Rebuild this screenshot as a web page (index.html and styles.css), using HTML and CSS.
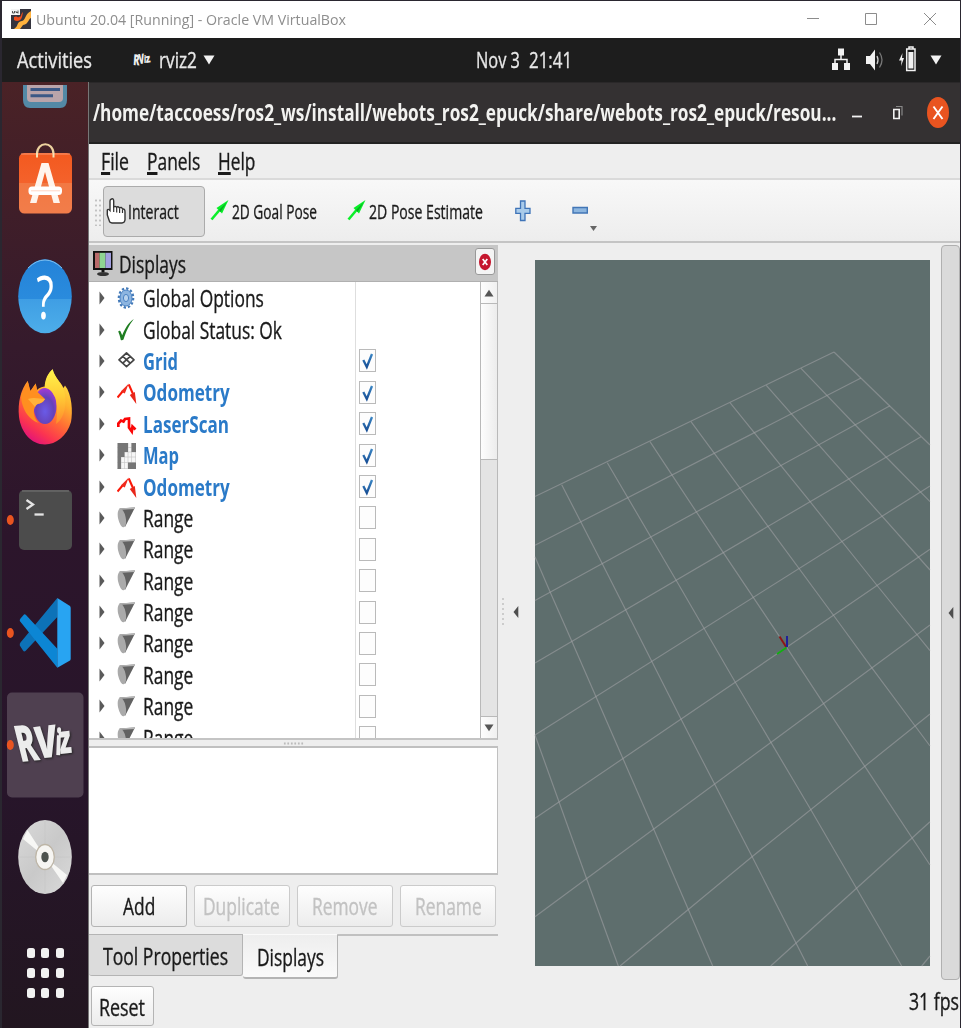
FILE: index.html
```html
<!DOCTYPE html>
<html lang="en">
<head>
<meta charset="utf-8">
<title>Ubuntu 20.04 [Running] - Oracle VM VirtualBox</title>
<link rel="stylesheet" href="styles.css">
</head>
<body>
<svg class="defs" width="0" height="0" aria-hidden="true">
  <defs>
    <linearGradient id="gOrange" x1="0" y1="0" x2="0" y2="1"><stop offset="0" stop-color="#f3591f"/><stop offset=".49" stop-color="#f4622b"/><stop offset=".5" stop-color="#f27843"/><stop offset="1" stop-color="#f27d4a"/></linearGradient>
    <linearGradient id="gBlue" x1="0" y1="0" x2="0" y2="1"><stop offset="0" stop-color="#2483d8"/><stop offset=".53" stop-color="#2a8bdd"/><stop offset=".54" stop-color="#3f9ee4"/><stop offset="1" stop-color="#4daeea"/></linearGradient>
    <linearGradient id="gFox" x1=".8" y1="0" x2=".3" y2="1"><stop offset="0" stop-color="#fff04a"/><stop offset=".35" stop-color="#ffb02e"/><stop offset=".6" stop-color="#ff6a35"/><stop offset=".82" stop-color="#fb3450"/><stop offset="1" stop-color="#e1127c"/></linearGradient>
    <linearGradient id="gFlame" x1="0" y1="0" x2="0" y2="1"><stop offset="0" stop-color="#fff44c"/><stop offset=".5" stop-color="#ffcb35"/><stop offset="1" stop-color="#ff8a2c"/></linearGradient>
    <radialGradient id="gGlobe" cx=".5" cy=".65" r=".65"><stop offset="0" stop-color="#6a5be8"/><stop offset=".6" stop-color="#6542b8"/><stop offset="1" stop-color="#a53bd6"/></radialGradient>
    <linearGradient id="gDisc" x1="0" y1="0" x2="1" y2="1"><stop offset="0" stop-color="#d9d9d9"/><stop offset=".5" stop-color="#c9c9c9"/><stop offset="1" stop-color="#dadada"/></linearGradient>
    <linearGradient id="gTick" x1="0" y1="0" x2="0" y2="1"><stop offset="0" stop-color="#3b86c4"/><stop offset="1" stop-color="#174f96"/></linearGradient>

    <symbol id="arrow" viewBox="0 0 6 14"><path d="M.5 .5 5.500 7 .5 13.500Z" fill="#5a5a5a"/></symbol>
    <symbol id="tick" viewBox="0 0 15 21"><path d="M3.300 10 6.800 17 12 4" fill="none" stroke="url(#gTick)" stroke-width="2.300"/></symbol>
    <symbol id="gear" viewBox="0 0 20 26"><ellipse cx="9" cy="12" rx="7.2" ry="9.6" fill="none" stroke="#4279b8" stroke-width="2.2" stroke-dasharray="2.4 2"/><ellipse cx="9" cy="12" rx="6" ry="8" fill="#8db5e0" stroke="#4b83c4"/><ellipse cx="9" cy="12" rx="2.6" ry="3.6" fill="#b9d3ee" stroke="#4b83c4"/></symbol>
    <symbol id="ok" viewBox="0 0 20 26"><path d="M1.2 14.5c1.2-1 2-.9 2.7.8l1.3 3C8 11.500 11.200 6 16.800 2 11.800 8.600 9 14.500 6.500 22.600 5.600 23.400 4.500 23.600 3.800 23 3.200 20 2.300 17 1.200 14.500Z" fill="#1f7d21"/></symbol>
    <symbol id="grid" viewBox="0 0 20 26"><path d="M9.500 5 17 11.800 9.500 18.600 2 11.800ZM5.800 8.400 13.200 15.200M13.200 8.400 5.800 15.200" fill="none" stroke="#454545" stroke-width="1.700" stroke-linejoin="round"/></symbol>
    <symbol id="odom" viewBox="0 0 20 26"><path d="M.5 17.500 6 11" stroke="#fb1808" stroke-width="2"/><path d="M3.800 11.500 11.800 3.500 7.800 13.500Z" fill="#f02a1e"/><path d="M11.800 4.500 16 14" stroke="#fb1808" stroke-width="2.100"/><path d="M12.800 15 17.800 12 19.300 24Z" fill="#e8261a"/></symbol>
    <symbol id="laser" viewBox="0 0 20 26"><path d="M1.300 16V12.500L4 9.500 6.500 10.500 8 8 12 7.500V16.500L14.800 20.500 15.500 15.500 18.500 18.500" fill="none" stroke="#fb0606" stroke-width="2.700"/></symbol>
    <symbol id="map" viewBox="0 0 20 26"><path d="M.5 0H19V26H.5Z" fill="#f6f6f6"/><path d="M4 0V26M7.500 0V26M11 0V26M14.500 0V26M18.500 0V26M.5 4.500H19M.5 9H19M.5 14H19M.5 19.500H19M.5 25.500H19" stroke="#c4c4c4" stroke-width=".6"/><path d="M.5 0H11V9H7.500V14H4V26H.5ZM14.500 0H19V9H14.500ZM11 19.500H19V26H11Z" fill="#767676"/></symbol>
    <symbol id="range" viewBox="0 0 20 26"><path d="M2.500 3.500 18 2.500 8 22Z" fill="#626262"/><path d="M2.500 3.500 18 2.200V4L4 4.800Z" fill="#b5b5b5"/><ellipse cx="4.900" cy="13" rx="3.800" ry="9.500" transform="rotate(-12 4.900 13)" fill="#aaa"/></symbol>
    <symbol id="pose" viewBox="0 0 20 24"><path d="M1.500 20.500 9.500 11" stroke="#0bef2a" stroke-width="2.600"/><path d="M6.500 9 18.500 1 12 14.500Z" fill="#06ef27"/><path d="M9 11 16.500 3.500 10.500 13Z" fill="#0bab22"/></symbol>
  </defs>
</svg>

<div class="screen">
  <header class="host-bar">
    <svg class="host-icon" viewBox="0 0 20 20"><path d="M0 0H20V20H0Z" fill="#35343e"/><path d="M3 20C8 17 5 13 11 12 15 11 13 6 20 2V9C17 10 18 15 12 16L9 20Z" fill="#ffb23e"/><path d="M3 8C6 6 7 10 10 7 10 5 11 4 12 3L11 8C10 12 6 13 3 11Z" fill="#ef4d1c"/><path d="M0 0H9V6H0Z" fill="#f4f4f4"/><path d="M1.500 2V4H3.500V2M5 2V3.500H7M7 1.500V4.500" fill="none" stroke="#444" stroke-width=".9"/></svg>
    <span class="t host-title">Ubuntu 20.04 [Running] - Oracle VM VirtualBox</span>
    <div class="host-controls">
      <svg viewBox="0 0 14 14"><path d="M1 6.500H13" stroke="#8c8c8c"/></svg>
      <svg viewBox="0 0 14 14"><path d="M1.500 1.500H12.500V12.500H1.500Z" fill="none" stroke="#8c8c8c"/></svg>
      <svg viewBox="0 0 14 14"><path d="M1 1 13 13M13 1 1 13" stroke="#8c8c8c"/></svg>
    </div>
  </header>

  <nav class="top-bar">
    <span class="t activities">Activities</span>
    <svg class="app-logo" viewBox="0 0 19 16"><g fill="#eee" font-weight="800"><text transform="translate(0 13) rotate(4) scale(.62 1)" font-size="15">R</text><text transform="translate(6 12) rotate(-5) scale(.58 1)" font-size="14">V</text><text transform="translate(11 11) scale(.6 1)" font-size="11">i</text><text transform="translate(13 11) rotate(-8) scale(.8 1)" font-size="12">z</text></g></svg>
    <span class="t app-name">rviz2</span>
    <svg class="caret" viewBox="0 0 12 10"><path d="M.5.500H11.500L6 9.500Z" fill="#f2f2f2"/></svg>
    <span class="t day">Nov 3</span>
    <span class="t clock">21:41</span>
    <svg class="net" viewBox="0 0 20 24"><path d="M7 1.500h6v7H7ZM1 16h6v7H1ZM13 16h6v7h-6Z" fill="#f2f2f2"/><path d="M10 8V12.500M4 17V12.500H16V17" fill="none" stroke="#f2f2f2" stroke-width="1.500"/></svg>
    <svg class="vol" viewBox="0 0 20 24"><path d="M1 8H5L10 1.500V22.500L5 16H1Z" fill="#f2f2f2"/><path d="M12 8Q14 12 12 16" fill="none" stroke="#ccc" stroke-width="1.300"/><path d="M14.500 4.500Q19.500 12 14.500 19.500" fill="none" stroke="#777" stroke-width="1.300"/></svg>
    <svg class="bat" viewBox="0 0 20 28"><path d="M4.500 8 1 15.500H3.500L3 21 6 13H4Z" fill="#f2f2f2"/><path d="M8.700 4H17V25.500H8.700ZM11 2H15V4H11Z" fill="none" stroke="#f2f2f2" stroke-width="1.500"/><path d="M10.400 7H15.400V23.500H10.400Z" fill="#f2f2f2"/></svg>
    <svg class="caret" viewBox="0 0 12 10"><path d="M.5.500H11.500L6 9.500Z" fill="#f2f2f2"/></svg>
  </nav>

  <div class="desktop">
    <aside class="dock">
      <div class="dock-item clipped"><svg viewBox="0 0 86 45.400"><path d="M21 3H65V18Q65 26 58 26H28Q21 26 21 18Z" fill="#5389a6"/><path d="M25 3H61V16Q61 20 57 20H29Q25 20 25 16Z" fill="#b9a4aa"/><path d="M28.500 7.500H58M28.500 13.800H51" stroke="#3b5886" stroke-width="3"/></svg></div>
      <div class="dock-item"><svg viewBox="0 0 86 112.300"><path d="M35 31V27C35 14 51.500 14 51.500 27V31" fill="none" stroke="#edd29f" stroke-width="2.200"/><rect x="17" y="26" width="53" height="60.500" rx="5.500" fill="url(#gOrange)"/><path d="M19 27H68" stroke="#fb9a72" stroke-width="1"/><path d="M35 26V30.500M51.500 26V30.500" stroke="#f7e3b6" stroke-width="2"/><path d="M39.500 36H46.500L58 76H51.500L43 45 34.500 76H28Z" fill="#fff4ec"/><rect x="26.500" y="59.500" width="33.500" height="8.500" rx="3.500" fill="#fff"/><path d="M29 63.800H58" stroke="#ffd4c2" stroke-width="1"/></svg></div>
      <div class="dock-item"><svg viewBox="0 0 86 112.300"><ellipse cx="43" cy="56.300" rx="26.800" ry="37" fill="url(#gBlue)"/><path d="M26 28Q43 12 60 28" fill="none" stroke="#7ec0f0" stroke-width="1"/><text transform="translate(34.200 79) scale(.68 1)" class="help-mark">?</text></svg></div>
      <div class="dock-item"><svg viewBox="0 0 86 112.300"><path d="M25.700 29C27 33 27 37 28.500 39L33.700 31.500 35 38C38 35 41 35 43 34.500 44 27 46 22 50.700 17.300 52 25 59 30 61.500 36L63 33.500C70 42 71 60 69 70 65 84 54 92.500 43 92.500 29 92.500 19 80 17 65 15.500 50 19 37 25.700 29Z" fill="url(#gFox)"/><ellipse cx="43" cy="54" rx="11.500" ry="18" fill="url(#gGlobe)"/><path d="M42.500 36C43 27 46 21 50.700 17.300 52 25 61 33 63 42 65 58 60 68 54 72 56 60 55 52 53.500 46L50 40Q46 35.500 42.500 36Z" fill="url(#gFlame)"/><path d="M25.700 29 28.500 39 33.700 31.500 35.500 40 43 47C40 54 35 49 33 55 30 60 33 68 37 71 26 68 19 55 19 43Z" fill="#ff8f20"/><path d="M26 47C32 45 38 47 43 47 40 53 35 50 33 55Z" fill="#ffb33a"/></svg></div>
      <div class="dock-item"><svg viewBox="0 0 86 112.300"><ellipse cx="8.300" cy="56" rx="3.500" ry="5" fill="#e95420"/><rect x="17" y="26" width="53" height="60" rx="5" fill="#4c4c4c"/><path d="M20 27H67" stroke="#777"/><path d="M24.500 36 31 40.500 24.500 45" fill="none" stroke="#e4e4e4" stroke-width="2.300"/><path d="M32.500 50.500H41.700" stroke="#e4e4e4" stroke-width="2.300"/></svg></div>
      <div class="dock-item"><svg viewBox="0 0 86 112.300"><ellipse cx="8.300" cy="56" rx="3.500" ry="5" fill="#e95420"/><path d="M55.300 21V40L23.500 74Q22 75 21 73.500L17.800 68.500Q17.500 66.500 18.500 65.500Z" fill="#0d72b8"/><path d="M17.800 44Q17.500 42.500 18.500 41.500L22 37.500Q23 37 24 38L55.300 71.700V90.700Z" fill="#0c86d4"/><path d="M55.300 21 68 29Q68.700 30 68.700 31V81.500Q68.700 83 68 83.500L55.300 90.700Z" fill="#28a4f2"/></svg></div>
      <div class="dock-item"><svg viewBox="0 0 86 112.300"><rect x="5" y="3.500" width="76.500" height="105" rx="5" fill="#4f4050"/><ellipse cx="8.300" cy="56" rx="3.500" ry="5" fill="#e95420"/><g class="rviz-mark"><text transform="translate(18.500 73) rotate(-6) skewX(8) scale(.58 1)" font-size="51">R</text><text transform="translate(35 70) rotate(-7) scale(.72 1)" font-size="45">V</text><text transform="translate(53 66) rotate(2) scale(.55 1)" font-size="36">i</text><text transform="translate(58 65) rotate(-6) scale(.62 1)" font-size="40">z</text></g></svg></div>
      <div class="dock-item"><svg viewBox="0 0 86 112.300"><ellipse cx="43" cy="56" rx="26.800" ry="37" fill="url(#gDisc)"/><path d="M43 56 21 38 25.500 29ZM43 56 65 74 61 82Z" fill="#f7f7f5"/><path d="M43 19V93M16.500 56H69.500" stroke="#c2c2c2" stroke-width=".5"/><ellipse cx="43" cy="56" rx="9.300" ry="12.500" fill="#f6f5f2" stroke="#bdb5a6" stroke-width="1.300"/><ellipse cx="43" cy="56" rx="3.700" ry="5.200" fill="#4d524e"/></svg></div>
      <div class="apps"><i></i><i></i><i></i><i></i><i></i><i></i><i></i><i></i><i></i></div>
    </aside>

    <main class="window">
      <header class="win-title">
        <span class="t win-name">/home/taccoess/ros2_ws/install/webots_ros2_epuck/share/webots_ros2_epuck/resou...</span>
        <svg class="w-min" viewBox="0 0 10 14"><path d="M0 10.500H10" stroke="#f2f2f2" stroke-width="1.800"/></svg>
        <svg class="w-max" viewBox="0 0 12 16"><path d="M1.800 4.500H7.200V13.500H1.800Z" fill="none" stroke="#f2f2f2" stroke-width="1.600"/><path d="M4 1.500H10V10.500" fill="none" stroke="#888" stroke-width="1.200"/></svg>
        <svg class="w-close" viewBox="0 0 22 32"><ellipse cx="11" cy="15.500" rx="11" ry="15.500" fill="#e95420"/><path d="M6.500 9.500 15.500 22M15.500 9.500 6.500 22" stroke="#fff" stroke-width="1.900"/></svg>
      </header>

      <nav class="menu">
        <span class="t m-file"><u>F</u>ile</span>
        <span class="t m-panels"><u>P</u>anels</span>
        <span class="t m-help"><u>H</u>elp</span>
      </nav>

      <div class="toolbar">
        <span class="grip"></span>
        <button class="tool active"><svg class="hand" viewBox="0 0 20 28"><path d="M5.500 2Q7.500 1 7.700 4V10Q9.500 8.500 10.500 10.500 12 8.800 13.500 11 15.500 9.500 16.500 12 19 11.500 19 15V23Q18.500 26 16 26H6Q3.500 26 3 23L1.300 18V13Q2 11.500 4 13.500V4Q4 2.500 5.500 2Z" fill="#fff" stroke="#333" stroke-width="1.400"/><path d="M7.700 10V15M10.700 11V15.500M13.600 11.500V16M16.500 12.500V16" stroke="#333" stroke-width="1.200"/></svg><span class="t t-interact">Interact</span></button>
        <svg class="pose p1"><use href="#pose"/></svg><span class="t t-goal">2D Goal Pose</span>
        <svg class="pose p2"><use href="#pose"/></svg><span class="t t-est">2D Pose Estimate</span>
        <svg class="plus" viewBox="0 0 16 22"><path d="M5.500 1H10V8.300H15V13.300H10V20.500H5.500V13.300H.8V8.300H5.500Z" fill="#a9cbea" stroke="#3f74b8" stroke-width="1.300"/></svg>
        <svg class="minus" viewBox="0 0 26 28"><path d="M1 10.500H15.300V16H1Z" fill="#8db6df" stroke="#4276b6" stroke-width="1.400"/><path d="M18 29H25L21.500 34Z" fill="#666"/></svg>
      </div>

      <div class="content">
        <section class="left">
          <header class="dock-head">
            <svg class="monitor" viewBox="0 0 20 28"><path d="M0 2H19.500V21H0Z" fill="#111"/><path d="M2 3.800H6.500V19H2Z" fill="#b86a6a"/><path d="M6.500 3.800H12.500V19H6.500Z" fill="#8fd492"/><path d="M12.500 3.800H18V19H12.500Z" fill="#a29fe0"/><path d="M8.500 21H11.500V23H8.500Z" fill="#111"/><ellipse cx="10" cy="25" rx="6" ry="2" fill="#333"/></svg>
            <span class="t d-title">Displays</span>
            <button class="d-close"><svg viewBox="0 0 12 18"><ellipse cx="6" cy="9" rx="6" ry="8.300" fill="#c5162e"/><path d="M3.700 6 8.300 12M8.300 6 3.700 12" stroke="#fff" stroke-width="1.700"/></svg></button>
          </header>
          <div class="tree">
            <ul class="rows">
              <li><svg class="ar"><use href="#arrow"/></svg><svg class="ic"><use href="#gear"/></svg><span class="t r-opt">Global Options</span></li>
              <li><svg class="ar"><use href="#arrow"/></svg><svg class="ic"><use href="#ok"/></svg><span class="t r-stat">Global Status: Ok</span></li>
              <li><svg class="ar"><use href="#arrow"/></svg><svg class="ic"><use href="#grid"/></svg><span class="t on r-grid">Grid</span><span class="box"><svg><use href="#tick"/></svg></span></li>
              <li><svg class="ar"><use href="#arrow"/></svg><svg class="ic"><use href="#odom"/></svg><span class="t on r-odom">Odometry</span><span class="box"><svg><use href="#tick"/></svg></span></li>
              <li><svg class="ar"><use href="#arrow"/></svg><svg class="ic"><use href="#laser"/></svg><span class="t on r-laser">LaserScan</span><span class="box"><svg><use href="#tick"/></svg></span></li>
              <li><svg class="ar"><use href="#arrow"/></svg><svg class="ic"><use href="#map"/></svg><span class="t on r-map">Map</span><span class="box"><svg><use href="#tick"/></svg></span></li>
              <li><svg class="ar"><use href="#arrow"/></svg><svg class="ic"><use href="#odom"/></svg><span class="t on r-odom">Odometry</span><span class="box"><svg><use href="#tick"/></svg></span></li>
              <li><svg class="ar"><use href="#arrow"/></svg><svg class="ic"><use href="#range"/></svg><span class="t r-range">Range</span><span class="box"></span></li>
              <li><svg class="ar"><use href="#arrow"/></svg><svg class="ic"><use href="#range"/></svg><span class="t r-range">Range</span><span class="box"></span></li>
              <li><svg class="ar"><use href="#arrow"/></svg><svg class="ic"><use href="#range"/></svg><span class="t r-range">Range</span><span class="box"></span></li>
              <li><svg class="ar"><use href="#arrow"/></svg><svg class="ic"><use href="#range"/></svg><span class="t r-range">Range</span><span class="box"></span></li>
              <li><svg class="ar"><use href="#arrow"/></svg><svg class="ic"><use href="#range"/></svg><span class="t r-range">Range</span><span class="box"></span></li>
              <li><svg class="ar"><use href="#arrow"/></svg><svg class="ic"><use href="#range"/></svg><span class="t r-range">Range</span><span class="box"></span></li>
              <li><svg class="ar"><use href="#arrow"/></svg><svg class="ic"><use href="#range"/></svg><span class="t r-range">Range</span><span class="box"></span></li>
              <li><svg class="ar"><use href="#arrow"/></svg><svg class="ic"><use href="#range"/></svg><span class="t r-range">Range</span><span class="box"></span></li>
            </ul>
            <div class="scroll">
              <span class="s-btn up"><svg viewBox="0 0 10 8"><path d="M.5 7.500 5 .8 9.500 7.500Z" fill="#555"/></svg></span>
              <span class="thumb"></span>
              <span class="trough"></span>
              <span class="s-btn down"><svg viewBox="0 0 10 8"><path d="M.5.500 5 7.200 9.500.500Z" fill="#555"/></svg></span>
            </div>
          </div>
          <div class="splitter"><span></span></div>
          <div class="help-box"></div>
          <div class="buttons">
            <button><span class="t b-add">Add</span></button>
            <button disabled><span class="t b-dup">Duplicate</span></button>
            <button disabled><span class="t b-rem">Remove</span></button>
            <button disabled><span class="t b-ren">Rename</span></button>
          </div>
          <div class="tabs">
            <div class="tab"><span class="t tab-tool">Tool Properties</span></div>
            <div class="tab current"><span class="t tab-disp">Displays</span></div>
            <div class="tab-rest"></div>
          </div>
        </section>

        <div class="side-handle"><span class="dots"></span><svg viewBox="0 0 6 14"><path d="M5.300 1V13L.5 7Z" fill="#4e4e4e"/></svg></div>

        <svg class="view" viewBox="0 0 395 706">
          <path d="M0 0H395V706H0Z" fill="#5e6e6d"/>
          <g class="lines">
            <path d="M0 236.500 299 92"/><path d="M0 285.300 326 118"/><path d="M0 340.500 355 145.700"/><path d="M0 403 386 176.700"/><path d="M0 475 395 226"/><path d="M0 558.300 251.700 387.300 395 289.300"/><path d="M0 656.700 395 365"/><path d="M85 706 216.700 597 395 454"/><path d="M235.700 706 395 561.700"/><path d="M386.700 706 395 696"/>
            <path d="M299 92 395 185"/><path d="M266 108.300 351 197 395 241.700"/><path d="M231.300 125.300 313.300 218.300 395 310"/><path d="M195 142.700 274.300 240.700 341.700 325 395 390.700"/><path d="M156 161.700 233 266.300 298.300 355 336.700 407.700 395 486"/><path d="M115 181.700 188.300 292.700 251.700 387.300 330 506.700 395 605"/><path d="M72.300 202.700 141 320 200 421.700 276 550 366.700 706"/><path d="M26.700 224.700 67.300 303.700 146 459 217.300 597 272.700 706"/><path d="M0 296.700 15 331.700 36.700 381 118.300 568.300 177.700 706"/><path d="M0 475 51.700 619 83.300 706"/>
          </g>
          <path d="M251.500 387.500 244.500 376.500" stroke="#8e1414" stroke-width="2"/><path d="M252 387V376" stroke="#20209a" stroke-width="2"/><path d="M251.500 387.500 242 394" stroke="#10b010" stroke-width="1.800"/>
        </svg>

        <div class="right-bar"><svg viewBox="0 0 6 14"><path d="M5.300 1V13L.5 7Z" fill="#4e4e4e"/></svg></div>
      </div>

      <footer class="status">
        <button><span class="t reset">Reset</span></button>
        <span class="t fps">31 fps</span>
      </footer>
    </main>
  </div>
</div>
</body>
</html>
```
FILE: styles.css
```css
* { box-sizing: border-box; }
body {
  margin: 0;
  width: 961px;
  height: 1028px;
  overflow: hidden;
  background: #2a2730;
  font-family: "Open Sans", "Noto Sans", sans-serif;
  color: #1a1a1a;
}
.defs { position: absolute; }
svg { display: block; flex: none; overflow: visible; }
button { font: inherit; color: inherit; padding: 0; margin: 0; }

.screen {
  display: flex;
  flex-direction: column;
  width: 958px;
  height: 1027px;
  margin: 1px 0 0 2px;
}

/* Condensed labels: the box has the drawn width, the glyphs are squeezed into it. */
.t {
  display: block;
  flex: none;
  white-space: nowrap;
  font-size: 23px;
  line-height: 30px;
  transform: scaleX(.756);
  transform-origin: 0 50%;
  text-align: left;
  -webkit-text-stroke: .35px currentColor;
}

/* Host window title */
.host-bar { display: flex; align-items: center; height: 37px; background: #fff; padding: 0 23px 0 9px; }
.host-icon { width: 20px; height: 20px; margin-top: -1px; }
.host-title { width: 310px; margin: -2px 0 0 5px; font-size: 15px; color: #8e8e8e; transform: scaleX(.947); -webkit-text-stroke: 0; }
.host-controls { display: flex; gap: 44px; margin: -1px 0 0 auto; }
.host-controls svg { width: 14px; height: 14px; }
.host-controls svg:last-child { margin-left: 1px; }

/* GNOME top bar */
.top-bar { display: flex; align-items: center; height: 44px; background: #1d1d1d; color: #e8e8e8; }
.top-bar .t { font-size: 22.500px; }
.activities { width: 75px; margin-left: 14.500px; transform: scaleX(.809); }
.app-logo { width: 19px; height: 16px; margin-left: 41.500px; }
.top-bar .app-name { width: 38px; margin-left: 7px; transform: scaleX(.767); }
.caret { width: 12px; height: 10px; margin-left: 6px; }
.day { width: 44px; margin-left: 261px; transform: scaleX(.728); }
.clock { width: 43px; margin-left: 9px; transform: scaleX(.75); }
.net { width: 20px; height: 24px; margin-left: 258.500px; margin-top: -2px; }
.vol { width: 20px; height: 24px; margin-left: 14.500px; margin-top: -1px; }
.bat { width: 20px; height: 28px; margin-left: 13px; margin-top: -3px; }
.bat + .caret { margin-left: 12px; }

.desktop { display: flex; flex: 1; min-height: 0; }

/* Dock */
.dock {
  display: flex;
  flex-direction: column;
  width: 86px;
  overflow: hidden;
  background: linear-gradient(#4a2226 0, #421f28 10%, #351a2c 28%, #2c152b 48%, #27152a 75%, #221620 100%);
}
.dock-item { flex: none; height: 112.300px; }
.dock-item svg { width: 86px; height: 100%; }
.dock-item.clipped { height: 45.400px; }
.help-mark { font-size: 60px; fill: #fff; }
.rviz-mark { fill: #ececec; font-weight: 800; filter: drop-shadow(1px 1px 1px #222); }
.apps {
  display: grid;
  grid-template-columns: repeat(3, 8px);
  grid-auto-rows: 10px;
  gap: 10px 6.500px;
  margin: 35px 0 0 24.500px;
}
.apps i { border-radius: 2.500px; background: #f2f2f2; }

/* RViz window */
.window { display: flex; flex-direction: column; width: 872px; background: #eee; border-left: 1px solid #777; }
.win-title { display: flex; align-items: center; height: 62px; background: #343132; border-bottom: 2px solid #222; border-top: 1px solid #2a2829; }
.win-name { width: 743px; margin-left: 4px; font-size: 22.500px; font-weight: 700; color: #f2f2f0; transform: scaleX(.766); -webkit-text-stroke: 0; }
.w-min { width: 10px; height: 14px; margin-left: 16px; }
.w-max { width: 12px; height: 16px; margin-left: 30px; }
.w-close { width: 22px; height: 32px; margin-left: 23px; }

.menu { display: flex; align-items: center; height: 36px; border-bottom: 2px solid #dadada; padding-left: 11.500px; gap: 17.500px; }
.menu u { text-decoration-thickness: 2.500px; text-underline-offset: 2px; }
.m-file { width: 29px; transform: scaleX(.769); }
.m-panels { width: 53px; }
.m-help { width: 38px; transform: scaleX(.75); }

.toolbar {
  display: flex;
  align-items: center;
  height: 63px;
  padding-top: 2px;
  background: linear-gradient(#f8f8f8, #ededed);
  border-bottom: 2px solid #c4c4c4;
}
.toolbar .t { margin-top: -1px; font-size: 20.500px; transform: scaleX(.686); }
.grip { width: 7px; height: 28px; margin-left: 4.500px; background: radial-gradient(circle, #c2c2c2 1px, transparent 1.200px) 0 0 / 4px 5px; }
.tool { display: flex; align-items: center; width: 102px; height: 51px; margin-left: 2.500px; border: 1.500px solid #ababab; border-radius: 4px; background: #dcdcdc; }
.hand { width: 20px; height: 28px; margin: -1px 0 0 2px; }
.t-interact { width: 51px; margin-left: 2px; }
.pose { width: 20px; height: 24px; margin-left: 4.500px; margin-right: 2px; }
.pose.p2 { margin-left: 30px; }
.t-goal { width: 85px; }
.t-est { width: 114px; }
.toolbar .t-goal { transform: scaleX(.669); }
.plus { width: 16px; height: 22px; margin-left: 32px; }
.minus { width: 26px; height: 28px; margin-left: 41px; }
.toolbar > svg { margin-top: -1px; }

.content { display: flex; height: 737px; }
.left { display: flex; flex-direction: column; width: 408.500px; padding-top: 2px; }
.dock-head { display: flex; align-items: center; flex: none; height: 37px; background: #c6c6c6; border-bottom: 1px solid #b0b0b0; }
.monitor { width: 20px; height: 28px; margin-left: 4px; }
.d-title { width: 67px; margin: 1px 0 0 6px; }
.d-close { display: flex; align-items: center; justify-content: center; width: 20px; height: 27px; margin: -3px 2.500px 0 auto; border: 1px solid #999; border-radius: 3px; background: #f4f4f4; }
.d-close svg { width: 12px; height: 18px; }

.tree { display: flex; flex: none; height: 458px; background: #fff; border-right: 1px solid #b9b9b9; border-bottom: 2px solid #c4c4c4; overflow: hidden; }
.rows { flex: 1; margin: 0; padding: .5px 0 8px; list-style: none; background: linear-gradient(#dedede, #dedede) 266px 0 / 1px 100% no-repeat; }
.rows li { display: grid; grid-template-columns: 18px 26.500px 211.500px 1fr; align-items: center; height: 31.400px; padding-left: 9.500px; }
.ar { width: 6px; height: 14px; }
.ic { width: 20px; height: 26px; margin-top: 1px; }
.on { font-weight: 700; color: #2a7ac8; -webkit-text-stroke: 0; }
.r-grid, .r-map { transform: scaleX(.719); }
.r-odom, .r-laser { transform: scaleX(.742); }
.rows .t { width: 50px; }
.box { width: 17px; height: 23px; margin-left: 4px; border: 1.500px solid #bababa; background: #fdfdfd; }
.box svg { width: 15px; height: 21px; }

.scroll { display: flex; flex-direction: column; width: 17px; border-left: 1px solid #b9b9b9; background: #e4e4e4; }
.s-btn { display: flex; align-items: center; justify-content: center; flex: none; height: 22px; background: linear-gradient(90deg, #fdfdfd, #f0f0f0); }
.s-btn svg { width: 10px; height: 8px; }
.up { border-bottom: 1px solid #b9b9b9; }
.thumb { height: 156px; background: linear-gradient(90deg, #fdfdfd, #ececec); border-bottom: 1px solid #b9b9b9; }
.trough { flex: 1; }
.down { border-top: 1px solid #b9b9b9; }

.splitter { display: flex; align-items: center; justify-content: center; height: 6px; flex: none; }
.splitter span { width: 21px; height: 3px; background: radial-gradient(circle, #bbb 1px, transparent 1.200px) 0 0 / 3.500px 3px; }
.help-box { flex: none; height: 129px; background: #fff; border: 2px solid #c0c0c0; border-left: 0; border-right-width: 1px; }

.buttons { display: flex; gap: 7px; padding: 10px 0 0 1.500px; }
.buttons button, .status button {
  display: flex;
  align-items: center;
  justify-content: center;
  width: 96px;
  height: 42px;
  border: 1.500px solid #b4b4b4;
  border-radius: 3px;
  background: linear-gradient(#fefefe, #ececec);
}
.buttons button:disabled { border-color: #cbcbcb; color: #c2c2c2; }
.b-add { width: 32px; }
.b-dup { width: 77px; }
.b-rem { width: 65px; }
.b-ren { width: 66px; }

.tabs { display: flex; align-items: flex-start; margin-top: 7px; }
.tab { display: flex; align-items: center; justify-content: center; width: 154px; height: 42px; padding-top: 1px; background: #dcdcdc; border: 1px solid #b4b4b4; border-left: 0; border-radius: 0 0 3px 3px; }
.tab.current { width: 95px; height: 45px; padding-top: 2px; background: linear-gradient(#eee, #fafafa); border-top-color: transparent; border-bottom-width: 2px; }
.tab-rest { flex: 1; border-top: 2px solid #c0c0c0; }
.tab-tool { width: 125px; transform: scaleX(.765); }
.tab-disp { width: 67px; }

.side-handle { display: flex; align-items: center; gap: 9px; width: 37.500px; padding-left: 4px; }
.side-handle .dots { width: 2px; height: 28px; background: repeating-linear-gradient(#ccc 0 2px, transparent 2px 5px); }
.side-handle svg, .right-bar svg { width: 6px; height: 14px; }
.view { width: 395px; height: 706px; margin-top: 17px; }
.lines { fill: none; stroke: #a4a4a8; stroke-opacity: .55; stroke-width: 1.200; }
.right-bar { display: flex; align-items: center; justify-content: center; width: 19px; margin: 2px 0 0 11px; border: 1.500px solid #b0b0b0; border-radius: 4px; background: #dadada; }

.status { display: flex; align-items: flex-start; justify-content: space-between; flex: 1; padding: 6px 1px 0 1.500px; }
.status button { width: 63px; height: 40px; padding-top: 1px; }
.reset { width: 46px; transform: scaleX(.777); }
.fps { width: 50px; transform: scaleX(.769); }
```
